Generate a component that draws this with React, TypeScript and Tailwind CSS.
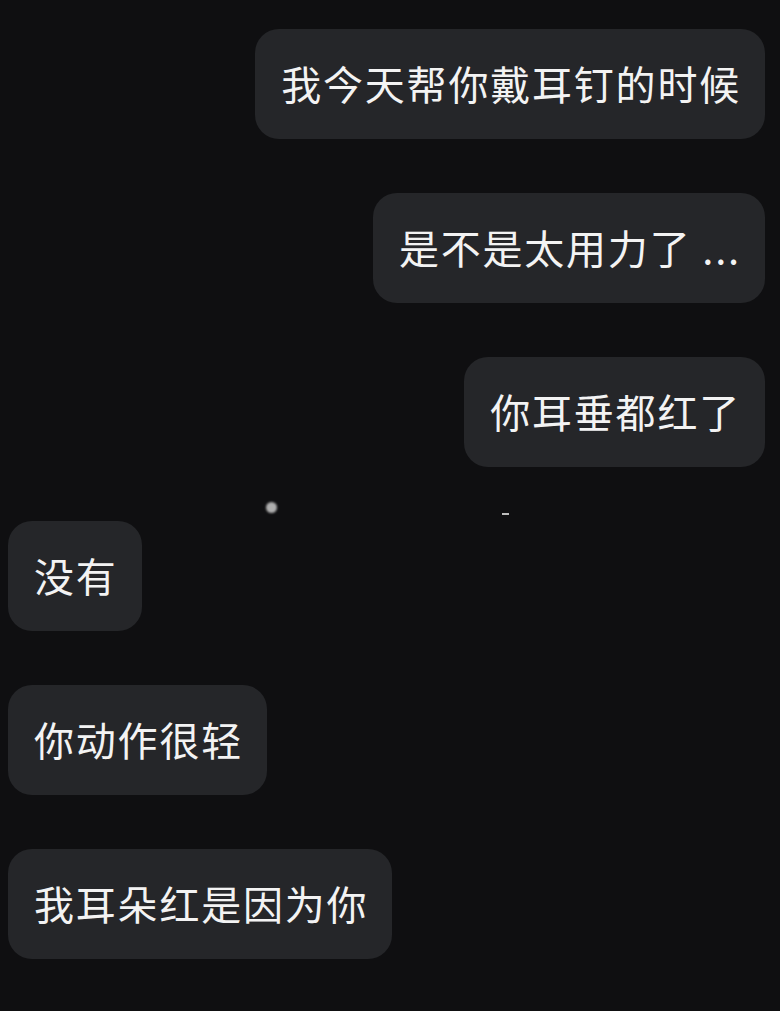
import React from "react";

const msgs: { text: string; me: boolean }[] = [
  { text: "我今天帮你戴耳钉的时候", me: true },
  { text: "是不是太用力了 ...", me: true },
  { text: "你耳垂都红了", me: true },
  { text: "没有", me: false },
  { text: "你动作很轻", me: false },
  { text: "我耳朵红是因为你", me: false },
];

export default function App() {
  return (
    <div
      className="relative w-[780px] h-[1011px] bg-[#0f0f11] overflow-hidden pt-[29px] pl-[8px] pr-[15px] flex flex-col gap-[54px]"
      style={{ fontFamily: '"Noto Sans CJK SC", "Noto Sans", sans-serif' }}
    >
      {msgs.map((m, i) => (
        <div key={i} className={`flex ${m.me ? "justify-end" : "justify-start"}`}>
          <div className="h-[110px] rounded-[24px] bg-[#252629] pl-[26px] pr-[24px] pb-[3px] flex items-center text-[40px] tracking-[1.8px] leading-none text-[#f3f3f3] whitespace-pre">
            {m.text}
          </div>
        </div>
      ))}
      <div className="absolute left-[266px] top-[502px] w-[11px] h-[11px] rounded-full bg-[#d6d6d6] opacity-80 blur-[1px]" />
      <div className="absolute left-[502px] top-[513px] w-[7px] h-[2px] bg-[#bdbdbd]" />
    </div>
  );
}
